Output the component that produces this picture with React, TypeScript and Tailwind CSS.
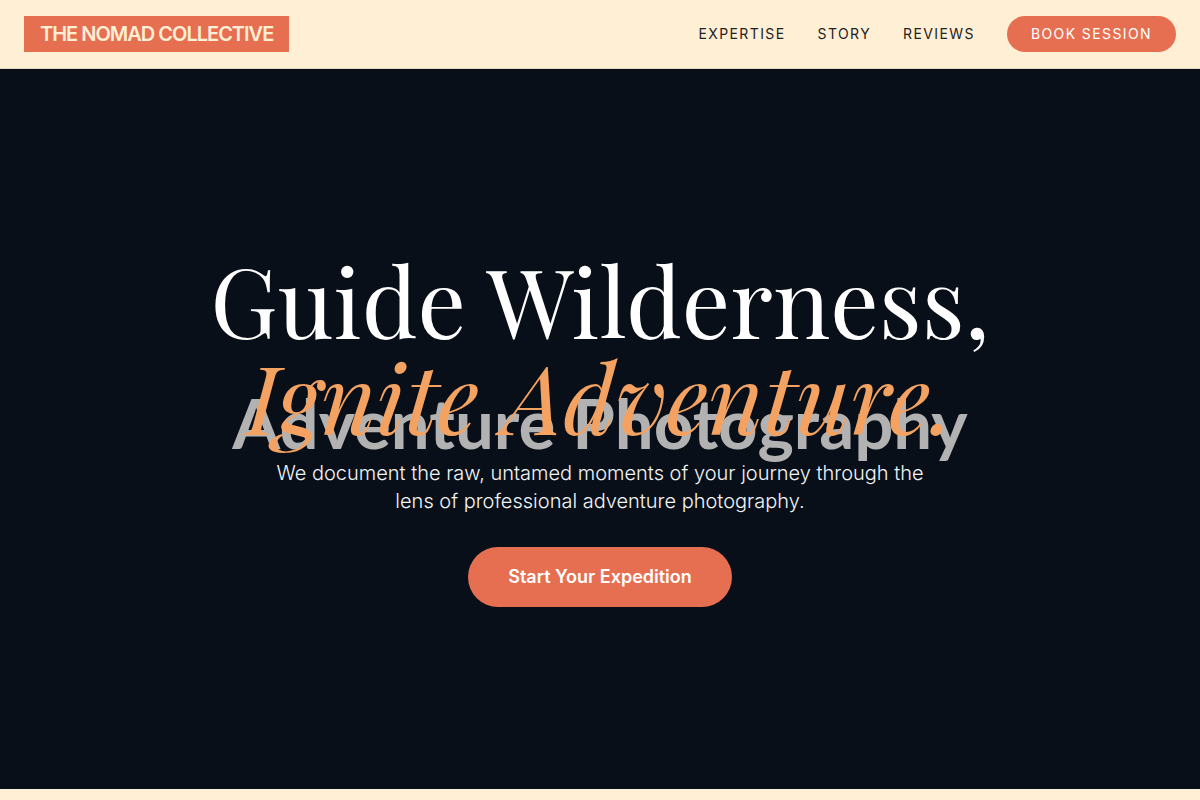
import React from 'react';

interface NavItem {
  label: string;
  href: string;
}

const navItems: NavItem[] = [
  { label: 'Expertise', href: '#expertise' },
  { label: 'Story', href: '#story' },
  { label: 'Reviews', href: '#reviews' },
];

function Header() {
  return (
    <header className="bg-[#ffefd5] border-b border-black/10">
      <div className="flex items-center justify-between px-6 py-4">
        <a
          href="#top"
          className="bg-[#e76f51] text-[#ffefd5] px-4 py-1 text-xl font-semibold uppercase tracking-tighter"
        >
          The Nomad Collective
        </a>
        <nav className="flex items-center gap-8 text-sm uppercase tracking-widest text-[#222222]">
          {navItems.map((item) => (
            <a key={item.href} href={item.href} className="hover:text-[#e76f51] transition-colors">
              {item.label}
            </a>
          ))}
          <a href="#book" className="bg-[#e76f51] text-white px-6 py-2 rounded-full uppercase">
            Book Session
          </a>
        </nav>
      </div>
    </header>
  );
}

function Hero() {
  return (
    <section className="relative isolate flex min-h-[90vh] items-center justify-center bg-[#080f19] px-6 text-center">
      {/* Backdrop wordmark */}
      <div
        aria-hidden="true"
        className="absolute inset-0 -z-10 flex items-center justify-center pb-3.5 font-['Lato',sans-serif] text-[69px] leading-none font-bold text-[#b2b2b2]"
      >
        Adventure Photography
      </div>

      <div className="flex flex-col items-center">
        <h1 className="mb-4 font-['Playfair_Display','Liberation_Serif',serif] text-8xl leading-none text-white">
          Guide Wilderness,
          <br />
          <span className="italic text-[#f4a261]">Ignite Adventure.</span>
        </h1>
        <p className="mb-8 max-w-2xl text-xl font-light text-gray-100">
          We document the raw, untamed moments of your journey through the lens of professional adventure photography.
        </p>
        <button
          type="button"
          className="rounded-full bg-[#e76f51] px-10 py-4 text-lg font-semibold text-white"
        >
          Start Your Expedition
        </button>
      </div>
    </section>
  );
}

export default function App() {
  return (
    <div id="top" className="min-h-screen bg-[#ffefd5] font-['Inter',sans-serif]">
      <Header />
      <main>
        <Hero />
      </main>
    </div>
  );
}
